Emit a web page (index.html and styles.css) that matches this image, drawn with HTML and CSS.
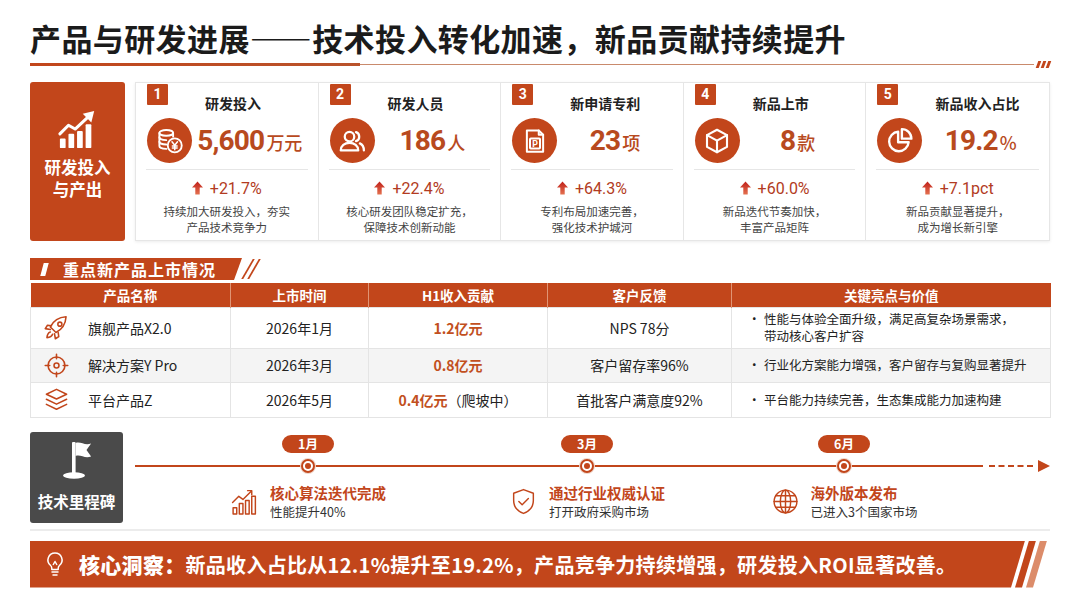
FILE: index.html
```html
<!DOCTYPE html>
<html lang="zh-CN">
<head>
<meta charset="utf-8">
<title>产品与研发进展</title>
<link rel="stylesheet" href="styles.css">
</head>
<body>
<div class="page">
  <header class="hdr">
    <h1 class="title">产品与研发进展——技术投入转化加速，新品贡献持续提升</h1>
    <div class="rule"><span class="rule-thick"></span><span class="rule-thin"></span><span class="rule-marks"><i></i><i></i><i></i></span></div>
  </header>

  <section class="kpi">
    <div class="kpi-label">
      <svg class="kpi-label-icon" viewBox="0 0 44 42" fill="#fff">
        <rect x="3" y="30" width="6" height="10" rx="1"/>
        <rect x="12" y="25" width="6" height="15" rx="1"/>
        <rect x="21" y="22" width="6" height="18" rx="1"/>
        <rect x="30" y="15" width="6" height="25" rx="1"/>
        <path d="M3 25 L12 16 L19 20 L33 7" fill="none" stroke="#fff" stroke-width="3.2" stroke-linejoin="round" stroke-linecap="round"/>
        <polygon points="27,4 39,1 36,13"/>
      </svg>
      <div class="kpi-label-text"><span>研发投入</span><span>与产出</span></div>
    </div>
    <div class="kpi-cards">
      <div class="card">
        <div class="card-head"><span class="badge">1</span><span class="card-title">研发投入</span></div>
        <div class="card-value">
          <span class="ic">
            <svg viewBox="0 0 24 24" fill="none" stroke="#fff" stroke-width="1.5" stroke-linecap="round" stroke-linejoin="round">
              <ellipse cx="9" cy="5.5" rx="5.5" ry="2.3"/>
              <path d="M3.5 5.5v10.5c0 1.3 2.5 2.3 5.5 2.3"/>
              <path d="M14.5 5.5v3"/>
              <path d="M3.5 9c0 1.3 2.5 2.3 5.5 2.3"/>
              <path d="M3.5 12.5c0 1.3 2.5 2.3 5.5 2.3"/>
              <circle cx="15.8" cy="15.5" r="5.6" fill="#c2461b"/>
              <path d="M13.6 12.6l2.2 2.8 2.2-2.8M15.8 15.4v3.6M13.9 15.9h3.8M13.9 17.6h3.8" stroke-width="1.2"/>
            </svg>
          </span>
          <span class="val"><b>5,600</b><small>万元</small></span>
        </div>
        <div class="card-sep"></div>
        <div class="card-change"><svg class="up" viewBox="0 0 12 14"><defs><linearGradient id="ug1" x1="0" y1="0" x2="0" y2="1"><stop offset="0" stop-color="#c0201a"/><stop offset="1" stop-color="#e4714f"/></linearGradient></defs><polygon points="6,0 12,6.5 8.4,6.5 8.4,14 3.6,14 3.6,6.5 0,6.5" fill="url(#ug1)"/></svg><span>+21.7%</span></div>
        <div class="card-desc"><span>持续加大研发投入，夯实</span><span>产品技术竞争力</span></div>
      </div>

      <div class="card">
        <div class="card-head"><span class="badge">2</span><span class="card-title">研发人员</span></div>
        <div class="card-value">
          <span class="ic">
            <svg viewBox="0 0 24 24" fill="none" stroke="#fff" stroke-width="1.8" stroke-linecap="round" stroke-linejoin="round">
              <circle cx="10" cy="8.5" r="3.8"/>
              <path d="M3 19.5c0-3.6 3.1-6 7-6s7 2.4 7 6z"/>
              <path d="M15.2 4.9a3.8 3.8 0 0 1 0 7.2"/>
              <path d="M18.3 13.9c1.9.9 3.2 2.9 3.2 5.6"/>
            </svg>
          </span>
          <span class="val"><b>186</b><small>人</small></span>
        </div>
        <div class="card-sep"></div>
        <div class="card-change"><svg class="up" viewBox="0 0 12 14"><polygon points="6,0 12,6.5 8.4,6.5 8.4,14 3.6,14 3.6,6.5 0,6.5" fill="url(#ug1)"/></svg><span>+22.4%</span></div>
        <div class="card-desc"><span>核心研发团队稳定扩充，</span><span>保障技术创新动能</span></div>
      </div>

      <div class="card">
        <div class="card-head"><span class="badge">3</span><span class="card-title">新申请专利</span></div>
        <div class="card-value">
          <span class="ic">
            <svg viewBox="0 0 24 24" fill="none" stroke="#fff" stroke-width="1.6" stroke-linecap="round" stroke-linejoin="round">
              <path d="M5.5 3.5h9.5l3.5 3.5v13.5h-13z"/>
              <path d="M15 3.5v3.5h3.5"/>
              <rect x="8" y="10" width="8" height="8" rx="0.6"/>
              <text x="12" y="16.6" font-size="7" font-weight="700" text-anchor="middle" fill="#fff" stroke="none" font-family="Roboto, sans-serif">P</text>
            </svg>
          </span>
          <span class="val"><b>23</b><small>项</small></span>
        </div>
        <div class="card-sep"></div>
        <div class="card-change"><svg class="up" viewBox="0 0 12 14"><polygon points="6,0 12,6.5 8.4,6.5 8.4,14 3.6,14 3.6,6.5 0,6.5" fill="url(#ug1)"/></svg><span>+64.3%</span></div>
        <div class="card-desc"><span>专利布局加速完善，</span><span>强化技术护城河</span></div>
      </div>

      <div class="card">
        <div class="card-head"><span class="badge">4</span><span class="card-title">新品上市</span></div>
        <div class="card-value">
          <span class="ic">
            <svg viewBox="0 0 24 24" fill="none" stroke="#fff" stroke-width="1.7" stroke-linecap="round" stroke-linejoin="round">
              <path d="M12 3l8 4.3v9.4L12 21l-8-4.3V7.3z"/>
              <path d="M4 7.3l8 4.4 8-4.4"/>
              <path d="M12 11.7V21"/>
            </svg>
          </span>
          <span class="val"><b>8</b><small>款</small></span>
        </div>
        <div class="card-sep"></div>
        <div class="card-change"><svg class="up" viewBox="0 0 12 14"><polygon points="6,0 12,6.5 8.4,6.5 8.4,14 3.6,14 3.6,6.5 0,6.5" fill="url(#ug1)"/></svg><span>+60.0%</span></div>
        <div class="card-desc"><span>新品迭代节奏加快，</span><span>丰富产品矩阵</span></div>
      </div>

      <div class="card">
        <div class="card-head"><span class="badge">5</span><span class="card-title">新品收入占比</span></div>
        <div class="card-value">
          <span class="ic">
            <svg viewBox="0 0 24 24" fill="none" stroke="#fff" stroke-width="1.9" stroke-linecap="round" stroke-linejoin="round">
              <path d="M10.5 4.6a7.8 7.8 0 1 0 8.4 8.4h-8.4z"/>
              <path d="M13.5 2.5v7.6h7.6a7.6 7.6 0 0 0-7.6-7.6z"/>
            </svg>
          </span>
          <span class="val"><b>19.2</b><small>%</small></span>
        </div>
        <div class="card-sep"></div>
        <div class="card-change"><svg class="up" viewBox="0 0 12 14"><polygon points="6,0 12,6.5 8.4,6.5 8.4,14 3.6,14 3.6,6.5 0,6.5" fill="url(#ug1)"/></svg><span>+7.1pct</span></div>
        <div class="card-desc"><span>新品贡献显著提升，</span><span>成为增长新引擎</span></div>
      </div>
    </div>
  </section>

  <section class="products">
    <div class="sec-head">
      <span class="sec-tab"><i class="tab-mark"></i>重点新产品上市情况</span>
      <span class="sec-slash"><i></i><i></i></span>
    </div>
    <table class="ptable">
      <colgroup>
        <col class="c1"><col class="c2"><col class="c3"><col class="c4"><col class="c5">
      </colgroup>
      <thead>
        <tr><th>产品名称</th><th>上市时间</th><th>H1收入贡献</th><th>客户反馈</th><th>关键亮点与价值</th></tr>
      </thead>
      <tbody>
        <tr class="r1">
          <td><div class="pname">
            <svg class="picon" viewBox="0 0 24 24" fill="none" stroke="#c2461b" stroke-width="1.4" stroke-linecap="round" stroke-linejoin="round">
              <path d="M9.5 14.5l-3-3c2.5-5 6.5-8.5 14-9-0.5 7.5-4 11.5-9 14z"/>
              <circle cx="15" cy="9" r="1.8"/>
              <path d="M7.5 10.5L4 10l-2 3 4.5 0.8"/>
              <path d="M13.5 16.5L14 20l-3 2-0.8-4.5"/>
              <path d="M6.5 16c-1.8 0.6-2.8 2.8-3 5 2.2-0.2 4.4-1.2 5-3"/>
            </svg>
            <span>旗舰产品X2.0</span></div></td>
          <td>2026年1月</td>
          <td><span class="rev">1.2亿元</span></td>
          <td>NPS 78分</td>
          <td class="hl"><div class="hl-item"><span class="dotb">•</span><span class="hl-lines"><span>性能与体验全面升级，满足高复杂场景需求，</span><span>带动核心客户扩容</span></span></div></td>
        </tr>
        <tr class="r2">
          <td><div class="pname">
            <svg class="picon" viewBox="0 0 24 24" fill="none" stroke="#c2461b" stroke-width="1.4" stroke-linecap="round" stroke-linejoin="round">
              <circle cx="12" cy="12" r="7.5"/>
              <circle cx="12" cy="12" r="2.2"/>
              <path d="M12 2v4M12 18v4M2 12h4M18 12h4"/>
            </svg>
            <span>解决方案Y Pro</span></div></td>
          <td>2026年3月</td>
          <td><span class="rev">0.8亿元</span></td>
          <td>客户留存率96%</td>
          <td class="hl"><div class="hl-item"><span class="dotb">•</span><span>行业化方案能力增强，客户留存与复购显著提升</span></div></td>
        </tr>
        <tr class="r3">
          <td><div class="pname">
            <svg class="picon" viewBox="0 0 24 24" fill="none" stroke="#c2461b" stroke-width="1.4" stroke-linecap="round" stroke-linejoin="round">
              <path d="M12 3l9 4.3-9 4.3-9-4.3z"/>
              <path d="M3 11.8l9 4.3 9-4.3"/>
              <path d="M3 16.3l9 4.3 9-4.3"/>
            </svg>
            <span>平台产品Z</span></div></td>
          <td>2026年5月</td>
          <td><span class="rev">0.4亿元</span>（爬坡中）</td>
          <td>首批客户满意度92%</td>
          <td class="hl"><div class="hl-item"><span class="dotb">•</span><span>平台能力持续完善，生态集成能力加速构建</span></div></td>
        </tr>
      </tbody>
    </table>
  </section>

  <section class="timeline">
    <div class="tl-label">
      <svg class="flag" viewBox="0 0 36 40" fill="#fff">
        <rect x="13" y="2" width="3.6" height="32" rx="1"/>
        <path d="M16.6 3c5-2 9 3 15.5 0.5L27.5 10l4.6 6.5c-6.5 2.5-10.5-2.5-15.5-0.5z"/>
        <ellipse cx="15" cy="35.5" rx="11" ry="3.2"/>
      </svg>
      <div class="tl-label-text">技术里程碑</div>
    </div>
    <div class="tl-track">
      <div class="tl-axis"><span class="axis-solid"></span><span class="axis-dash"></span><span class="axis-arrow"></span></div>
      <div class="ms ms1">
        <span class="pill">1月</span>
        <span class="dot"></span>
        <div class="ms-body">
          <svg class="ms-icon" viewBox="0 0 28 28" fill="none" stroke="#c2461b" stroke-width="1.4" stroke-linecap="round" stroke-linejoin="round">
            <rect x="3" y="20" width="3.5" height="6"/>
            <rect x="9" y="16" width="3.5" height="10"/>
            <rect x="15" y="13" width="3.5" height="13"/>
            <rect x="21" y="9" width="3.5" height="17"/>
            <path d="M2.5 15l6-6 4 3 8-8"/>
            <path d="M17 3.5h4v4"/>
          </svg>
          <div class="ms-text"><div class="ms-title">核心算法迭代完成</div><div class="ms-sub">性能提升40%</div></div>
        </div>
      </div>
      <div class="ms ms2">
        <span class="pill">3月</span>
        <span class="dot"></span>
        <div class="ms-body">
          <svg class="ms-icon" viewBox="0 0 28 28" fill="none" stroke="#c2461b" stroke-width="1.4" stroke-linecap="round" stroke-linejoin="round">
            <path d="M14 2.5l9.5 3.5v7c0 6-4.2 10.5-9.5 12.5C8.7 23.5 4.5 19 4.5 13V6z"/>
            <path d="M9.5 14l3.2 3.2 6-6"/>
          </svg>
          <div class="ms-text"><div class="ms-title">通过行业权威认证</div><div class="ms-sub">打开政府采购市场</div></div>
        </div>
      </div>
      <div class="ms ms3">
        <span class="pill">6月</span>
        <span class="dot"></span>
        <div class="ms-body">
          <svg class="ms-icon" viewBox="0 0 28 28" fill="none" stroke="#c2461b" stroke-width="1.4" stroke-linecap="round" stroke-linejoin="round">
            <circle cx="14" cy="14" r="11"/>
            <ellipse cx="14" cy="14" rx="5" ry="11"/>
            <path d="M3 14h22M4.5 8.5h19M4.5 19.5h19M14 3v22"/>
          </svg>
          <div class="ms-text"><div class="ms-title">海外版本发布</div><div class="ms-sub">已进入3个国家市场</div></div>
        </div>
      </div>
    </div>
  </section>

  <div class="divider"></div>

  <section class="insight">
    <div class="insight-bar">
      <svg class="bulb" viewBox="0 0 20 26" fill="none" stroke="#fff" stroke-width="1.5" stroke-linecap="round" stroke-linejoin="round">
        <path d="M10 2a7 7 0 0 0-4.6 12.3c1 .9 1.4 1.8 1.4 3v1.2h6.4v-1.2c0-1.2.4-2.1 1.4-3A7 7 0 0 0 10 2z"/>
        <path d="M7 21h6M8 24h4"/>
        <path d="M8.3 13.5l1.7-3 1.7 3"/>
      </svg>
      <p class="insight-text"><strong>核心洞察：</strong>新品收入占比从12.1%提升至19.2%，产品竞争力持续增强，研发投入ROI显著改善。</p>
    </div>
    <span class="stripe s1"></span>
    <span class="stripe s2"></span>
  </section>
</div>
</body>
</html>
```

FILE: styles.css
```css
* { box-sizing: border-box; margin: 0; padding: 0; }
html, body { width: 1080px; height: 608px; overflow: hidden; background: #fff; }
body { font-family: "Noto Sans CJK SC", "Noto Sans", sans-serif; color: #222; }
.page { padding: 0 30px; }

/* header */
.hdr { padding-top: 17px; }
.title { font-size: 31px; line-height: 42px; font-weight: 700; color: #1b1b1b; letter-spacing: 0.4px; }
.rule { display: flex; align-items: center; height: 6px; margin-top: 2px; }
.rule-thick { width: 330px; height: 3px; background: linear-gradient(90deg, #c2461b, #b9532b); }
.rule-thin { flex: 1; height: 1px; background: #c98a6c; }
.rule-marks { display: flex; gap: 2px; margin-left: 3px; }
.rule-marks i { display: block; width: 3px; height: 7px; background: #c2461b; transform: skewX(-20deg); }

/* KPI */
.kpi { display: flex; gap: 10px; margin-top: 15px; height: 159px; }
.kpi-label { width: 95px; background: #c2461b; border-radius: 3px; display: flex; flex-direction: column; align-items: center; justify-content: center; padding-bottom: 14px; color: #fff; }
.kpi-label-icon { width: 42px; height: 40px; }
.kpi-label-text { display: flex; flex-direction: column; align-items: center; gap: 0; margin-top: 6px; font-size: 16.5px; font-weight: 700; line-height: 22px; }
.kpi-cards { flex: 1; display: grid; grid-template-columns: repeat(5, 1fr); border: 1px solid #e6e6e6; box-shadow: 0 1px 3px rgba(0,0,0,.08); }
.card { border-right: 1px solid #e6e6e6; padding-top: 1px; display: flex; flex-direction: column; }
.card:last-child { border-right: none; }
.card-head { display: flex; align-items: flex-start; padding-left: 11px; height: 30px; }
.badge { width: 21px; height: 21px; background: #c2461b; color: #fff; font: 700 14px/21px Roboto, sans-serif; text-align: center; border-radius: 1px; }
.card-title { margin-left: 37px; margin-top: 10px; font-size: 14px; font-weight: 700; line-height: 18px; color: #222; }
.card-value { display: flex; align-items: center; height: 45px; margin-top: 4px; padding-left: 11px; }
.ic { width: 45px; height: 45px; border-radius: 50%; background: #c2461b; display: flex; align-items: center; justify-content: center; flex: none; }
.ic svg { width: 30px; height: 30px; }
.val { flex: 1; text-align: center; padding-right: 10px; color: #b84a1e; white-space: nowrap; }
.val b { font-family: Roboto, sans-serif; font-size: 28px; font-weight: 700; letter-spacing: -0.8px; }
.val small { font-size: 18px; font-weight: 500; margin-left: 2px; }
.card-sep { margin: 6px 10px 0; height: 1px; background: #e6e6e6; }
.card-change { margin-top: 8px; height: 20px; display: flex; align-items: center; justify-content: center; gap: 7px; font-family: Roboto, sans-serif; font-size: 16px; color: #b23b22; }
.up { width: 11px; height: 14px; }
.card-desc { margin-top: 5px; display: flex; flex-direction: column; align-items: center; font-size: 11.5px; line-height: 16px; color: #444; }

/* products */
.sec-head { display: flex; align-items: center; margin-top: 17px; height: 22px; }
.sec-tab { width: 212px; height: 22px; background: #c2461b; clip-path: polygon(0 0, 100% 0, calc(100% - 8px) 100%, 0 100%); display: flex; align-items: center; color: #fff; font-weight: 700; font-size: 16px; padding-left: 12px; letter-spacing: 1px; }
.tab-mark { display: block; width: 5px; height: 13px; background: #fff; transform: skewX(-15deg); margin-right: 16px; }
.sec-slash { display: flex; gap: 4px; margin-left: 5px; }
.sec-slash i { display: block; width: 2px; height: 20px; background: #c2461b; transform: skewX(-30deg); }

.ptable { width: 100%; border-collapse: collapse; table-layout: fixed; margin-top: 3px; font-size: 14px; color: #222; }
.c1 { width: 200px; } .c2 { width: 138px; } .c3 { width: 179px; } .c4 { width: 184px; } .c5 { width: 319px; }
.ptable th { background: #c2461b; color: #fff; font-weight: 700; font-size: 13.5px; height: 24px; padding: 0; border-left: 1px solid #e09474; }
.ptable th:first-child { border-left: none; }
.ptable td { border: 1px solid #e4e4e4; text-align: center; padding: 0; }
.r1 td { height: 41px; }
.r2 td { height: 34px; background: #f4f4f4; }
.r3 td { height: 35px; }
.pname { display: flex; align-items: center; padding-left: 12px; }
.picon { width: 27px; height: 27px; flex: none; }
.pname span { margin-left: 18px; }
.rev { color: #c2501e; font-weight: 700; }
.ptable td.hl { text-align: left; font-size: 12.5px; line-height: 16px; }
.hl-item { display: flex; padding-left: 16px; }
.hl-lines { display: flex; flex-direction: column; gap: 1px; }
.dotb { width: 16px; flex: none; }

/* timeline */
.timeline { display: flex; margin-top: 14px; height: 91px; }
.tl-label { width: 93px; background: #4a4a4a; border-radius: 3px; color: #fff; display: flex; flex-direction: column; align-items: center; padding-top: 8px; }
.flag { width: 36px; height: 40px; }
.tl-label-text { font-size: 15.5px; font-weight: 700; margin-top: 10px; line-height: 22px; }
.tl-track { flex: 1; margin-left: 12px; position: relative; display: flex; padding-left: 73px; }
.tl-axis { position: absolute; left: 0; right: 0; top: 28px; height: 12px; display: flex; align-items: center; }
.axis-solid { flex: 1; height: 2px; background: #c2461b; }
.axis-dash { width: 44px; border-top: 2px dashed #c2461b; margin: 0 5px 0 6px; }
.axis-arrow { width: 0; height: 0; border-left: 12px solid #c2461b; border-top: 6px solid transparent; border-bottom: 6px solid transparent; }
.ms { width: 200px; display: flex; flex-direction: column; align-items: center; position: relative; }
.ms2 { margin-left: 79px; }
.ms3 { margin-left: 57px; }
.pill { margin-top: 3px; height: 18px; width: 52px; border-radius: 9px; background: #c2461b; color: #fff; font-size: 12.5px; font-weight: 700; line-height: 18px; text-align: center; }
.dot { margin-top: 6px; width: 14px; height: 14px; border-radius: 50%; border: 2px solid #c2461b; background: #fff; display: flex; align-items: center; justify-content: center; box-shadow: 0 0 0 1px #f0d6ca; }
.dot::after { content: ""; width: 6px; height: 6px; border-radius: 50%; background: #c2461b; }
.ms-body { display: flex; align-items: center; margin-top: 10px; gap: 11px; }
.ms-icon { width: 29px; height: 29px; flex: none; }
.ms-title { font-size: 14.5px; font-weight: 700; color: #c2461b; line-height: 20px; white-space: nowrap; }
.ms-sub { font-size: 12.5px; color: #333; line-height: 18px; white-space: nowrap; }

.divider { height: 2px; background: #ececec; margin-top: 6px; }

/* insight */
.insight { display: flex; margin-top: 10px; height: 47px; }
.insight-bar { width: 995px; flex: none; background: #c2461b; clip-path: polygon(0 0, 100% 0, calc(100% - 14px) 100%, 0 100%); display: flex; align-items: center; padding-left: 15px; color: #fff; }
.bulb { width: 20px; height: 26px; flex: none; }
.insight-text { margin-left: 14px; font-size: 20px; font-weight: 700; letter-spacing: 0.3px; white-space: nowrap; }
.insight-text strong { font-size: 21px; }
.stripe { width: 21px; flex: none; clip-path: polygon(14px 0, 21px 0, 7px 100%, 0 100%); margin-left: -10px; }
.s1 { background: #c2461b; }
.s2 { background: #dc8c6a; }
```
